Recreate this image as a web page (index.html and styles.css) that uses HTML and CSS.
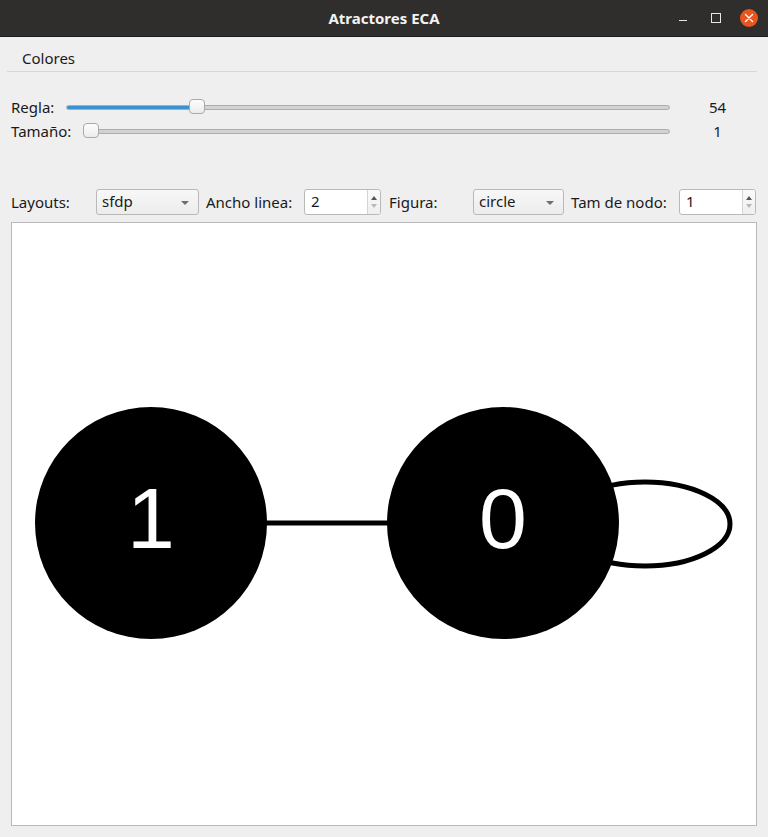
FILE: index.html
```html
<!DOCTYPE html>
<html lang="es">
<head>
<meta charset="utf-8">
<title>Atractores ECA</title>
<link rel="stylesheet" href="styles.css">
</head>
<body>
<div class="window">
  <header class="titlebar">
    <span class="title">Atractores ECA</span>
    <div class="winbtns">
      <span class="wbtn min"></span>
      <span class="wbtn max"></span>
      <span class="wbtn close">
        <svg width="18" height="18" viewBox="0 0 18 18"><path d="M5.5 5.5 L12.5 12.5 M12.5 5.5 L5.5 12.5" stroke="#fff" stroke-width="1.4" stroke-linecap="round"/></svg>
      </span>
    </div>
  </header>
  <nav class="menubar"><span class="menuitem">Colores</span></nav>

  <section class="sliders">
    <div class="srow">
      <span class="slabel">Regla:</span>
      <div class="slider">
        <div class="groove"><div class="fill" style="width:21.6%"></div></div>
        <div class="handle" style="left:21.6%"></div>
      </div>
      <span class="sval">54</span>
    </div>
    <div class="srow">
      <span class="slabel">Tamaño:</span>
      <div class="slider">
        <div class="groove"></div>
        <div class="handle start"></div>
      </div>
      <span class="sval">1</span>
    </div>
  </section>

  <section class="toolbar">
    <span class="tlabel w-layouts">Layouts:</span>
    <div class="combo c-sfdp"><span>sfdp</span><i class="caret"></i></div>
    <span class="tlabel w-ancho">Ancho linea:</span>
    <div class="spin s-ancho"><span>2</span><div class="arrows"><i class="up"></i><i class="down"></i></div></div>
    <span class="tlabel w-figura">Figura:</span>
    <div class="combo c-circle"><span>circle</span><i class="caret"></i></div>
    <span class="tlabel w-tam">Tam de nodo:</span>
    <div class="spin s-tam"><span>1</span><div class="arrows"><i class="up"></i><i class="down"></i></div></div>
  </section>

  <main class="canvas">
    <svg class="graph" width="745" height="602" viewBox="12 223 745 602">
      <ellipse cx="645" cy="524" rx="85" ry="42" fill="none" stroke="#000" stroke-width="5"/>
      <line x1="260" y1="523" x2="395" y2="523" stroke="#000" stroke-width="5"/>
      <circle cx="151" cy="523" r="116" fill="#000"/>
      <circle cx="503" cy="523" r="116" fill="#000"/>
      <text x="151" y="548" class="nlabel">1</text>
      <text x="503" y="548" class="nlabel">0</text>
    </svg>
  </main>
</div>
</body>
</html>
```
FILE: styles.css
```css
* { box-sizing: border-box; }
html, body { margin: 0; padding: 0; }
body {
  width: 768px;
  height: 837px;
  overflow: hidden;
  background: #efefef;
  font-family: "Noto Sans", "DejaVu Sans", sans-serif;
  font-size: 15px;
  color: #1a1a1a;
}
.window { display: flex; flex-direction: column; height: 837px; }

.titlebar {
  height: 37px;
  background: #302e2d;
  border-bottom: 1px solid #1e1d1c;
  position: relative;
  display: flex;
  align-items: center;
  justify-content: center;
  flex: none;
}
.title { color: #f3f3f3; font-weight: bold; font-size: 15px; }
.winbtns {
  position: absolute;
  right: 10px;
  top: 9px;
  display: flex;
  gap: 15px;
  align-items: center;
}
.wbtn { width: 18px; height: 18px; display: flex; align-items: center; justify-content: center; position: relative; }
.wbtn.min::after { content: ""; width: 8px; height: 1.5px; background: #e6e6e6; margin-top: 5px; }
.wbtn.max::after { content: ""; width: 8px; height: 8px; border: 1.3px solid #e6e6e6; }
.wbtn.close { background: #e95420; border-radius: 50%; }

.menubar {
  height: 35px;
  margin: 0 11px 0 7px;
  border-bottom: 1px solid #d6d6d6;
  display: flex;
  align-items: center;
  padding-left: 15px;
  padding-top: 7px;
  flex: none;
}
.menuitem { font-size: 15px; }

.sliders { padding: 23px 11px 0 11px; display: flex; flex-direction: column; flex: none; }
.srow { height: 24px; display: flex; align-items: center; }
.slabel { margin-right: 12px; }
.slider { position: relative; flex: 1; height: 16px; display: flex; align-items: center; }
.groove {
  width: 100%;
  height: 5px;
  background: #d2d2d2;
  border: 1px solid #adadad;
  border-radius: 3px;
  overflow: hidden;
}
.fill { height: 100%; background: #3a93d0; border-right: 1px solid #1f6a9b; }
.handle {
  position: absolute;
  top: 0;
  width: 16px;
  height: 15px;
  margin-left: -8px;
  background: linear-gradient(#fdfdfd, #ececec);
  border: 1px solid #a9a9a9;
  border-radius: 4px;
}
.handle.start { left: 0; margin-left: 0; }
.sval { width: 87px; padding-left: 8px; text-align: center; flex: none; }

.toolbar {
  margin-top: 46px;
  height: 26px;
  padding-left: 11px;
  display: flex;
  align-items: center;
  flex: none;
}
.tlabel { white-space: nowrap; flex: none; }
.w-layouts { width: 85px; }
.w-ancho { width: 98px; }
.w-figura { width: 84px; }
.w-tam { width: 108px; }
.combo {
  height: 26px;
  border: 1px solid #b9b9b9;
  border-radius: 3px;
  background: linear-gradient(#f8f8f8, #ececec);
  display: flex;
  align-items: center;
  padding-left: 5px;
  position: relative;
  margin-right: 7px;
  flex: none;
}
.c-sfdp { width: 103px; }
.c-circle { width: 91px; }
.combo span { margin-top: -2px; }
.caret {
  position: absolute;
  right: 9px;
  top: 11px;
  border-left: 4px solid transparent;
  border-right: 4px solid transparent;
  border-top: 4px solid #6d6d6d;
}
.spin {
  height: 26px;
  border: 1px solid #b9b9b9;
  border-radius: 3px;
  background: #fff;
  display: flex;
  align-items: center;
  padding-left: 6px;
  position: relative;
  margin-right: 8px;
  flex: none;
}
.s-ancho { width: 77px; }
.s-tam { width: 77px; margin-right: 0; }
.spin span { flex: 1; margin-top: -2px; }
.arrows {
  width: 13px;
  height: 100%;
  border-left: 1px solid #d4d4d4;
  background: linear-gradient(#fafafa, #efefef);
  display: flex;
  flex-direction: column;
  align-items: center;
  justify-content: center;
  gap: 4px;
  border-radius: 0 3px 3px 0;
}
.arrows .up { border-left: 3.5px solid transparent; border-right: 3.5px solid transparent; border-bottom: 4px solid #555; }
.arrows .down { border-left: 3.5px solid transparent; border-right: 3.5px solid transparent; border-top: 4px solid #b8b8b8; }

.canvas {
  margin: 7px 11px 11px 11px;
  height: 604px;
  border: 1px solid #b9b9b9;
  background: #fff;
  flex: none;
  overflow: hidden;
}
.graph { display: block; }
.nlabel {
  fill: #fff;
  font-family: "Liberation Sans", Arial, sans-serif;
  font-size: 86px;
  text-anchor: middle;
}
```
